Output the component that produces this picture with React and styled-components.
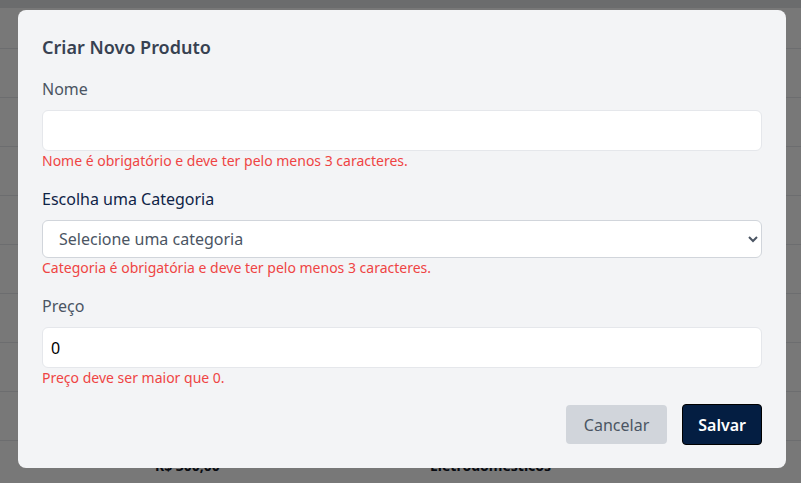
import styled, { createGlobalStyle } from "styled-components";

const font = `"Noto Sans", "Lato", sans-serif`;

const GlobalStyle = createGlobalStyle`
  * { box-sizing: border-box; }
  body {
    margin: 0;
    font-family: ${font};
    background: #ffffff;
    overflow: hidden;
  }
`;

const Page = styled.div`
  width: 801px;
  height: 483px;
  overflow: hidden;
`;

const Strip = styled.div`
  height: 8px;
  background: #e3e5e8;
`;

const Row = styled.div`
  display: grid;
  grid-template-columns: 155px 275px 1fr;
  align-items: center;
  height: ${(p) => (p.$short ? "41px" : "49px")};
  border-bottom: 1px solid #e5e7eb;
  font-size: 14px;
  font-weight: 700;
  color: #111827;
`;

const Overlay = styled.div`
  position: fixed;
  inset: 0;
  background: rgba(0, 0, 0, 0.53);
  display: flex;
  align-items: flex-start;
  padding: 10px 15px 0 18px;
`;

const Modal = styled.div`
  width: 768px;
  height: 458px;
  background: #f3f4f6;
  border-radius: 8px;
  padding: 24px;
  display: flex;
  flex-direction: column;
`;

const Title = styled.h2`
  margin: 0 0 16px;
  font-size: 18px;
  line-height: 27px;
  font-weight: 600;
  color: #374151;
`;

const Field = styled.div`
  display: flex;
  flex-direction: column;
  margin-bottom: 16px;
`;

const Label = styled.label`
  font-size: 16px;
  line-height: 24px;
  margin-bottom: 9px;
  color: ${(p) => (p.$dark ? "#0f2447" : "#4b5563")};
`;

const Input = styled.input`
  height: 41px;
  border: 1px solid #e5e7eb;
  border-radius: 6px;
  background: #ffffff;
  padding: 0 8px;
  font-family: ${font};
  font-size: 16px;
  color: #000000;
  outline: none;
`;

const Select = styled.select`
  height: 38px;
  border: 1px solid #d1d5db;
  border-radius: 6px;
  background: #ffffff;
  padding: 0 12px;
  font-family: ${font};
  font-size: 16px;
  color: #4b5563;
  outline: none;
`;

const Error = styled.span`
  font-size: 14px;
  line-height: 20px;
  color: #ef4444;
`;

const Actions = styled.div`
  display: flex;
  justify-content: flex-end;
  align-items: center;
  gap: 15px;
`;

const Button = styled.button`
  height: ${(p) => (p.$primary ? "41px" : "39px")};
  padding: 0 ${(p) => (p.$primary ? "15px" : "18px")};
  border-radius: 4px;
  font-family: ${font};
  font-size: 16px;
  font-weight: ${(p) => (p.$primary ? 600 : 400)};
  background: ${(p) => (p.$primary ? "#041e42" : "#d1d5db")};
  color: ${(p) => (p.$primary ? "#ffffff" : "#4b5563")};
  border: ${(p) => (p.$primary ? "1px solid #000000" : "none")};
  cursor: pointer;
`;

// rows behind the dialog; only the last one peeks out below it
const rowCount = 8;

export default function App() {
  return (
    <>
      <GlobalStyle />
      <Page>
        <Strip />
        <Row $short />
        {Array.from({ length: rowCount }).map((_, i) => (
          <Row key={i} />
        ))}
        <Row>
          <span />
          <span>R$ 300,00</span>
          <span>Eletrodomésticos</span>
        </Row>
      </Page>
      <Overlay>
        <Modal>
          <Title>Criar Novo Produto</Title>
          <Field>
            <Label>Nome</Label>
            <Input type="text" defaultValue="" />
            <Error>Nome é obrigatório e deve ter pelo menos 3 caracteres.</Error>
          </Field>
          <Field>
            <Label $dark>Escolha uma Categoria</Label>
            <Select defaultValue="">
              <option value="">Selecione uma categoria</option>
            </Select>
            <Error>Categoria é obrigatória e deve ter pelo menos 3 caracteres.</Error>
          </Field>
          <Field>
            <Label>Preço</Label>
            <Input type="number" defaultValue="0" />
            <Error>Preço deve ser maior que 0.</Error>
          </Field>
          <Actions>
            <Button>Cancelar</Button>
            <Button $primary>Salvar</Button>
          </Actions>
        </Modal>
      </Overlay>
    </>
  );
}
